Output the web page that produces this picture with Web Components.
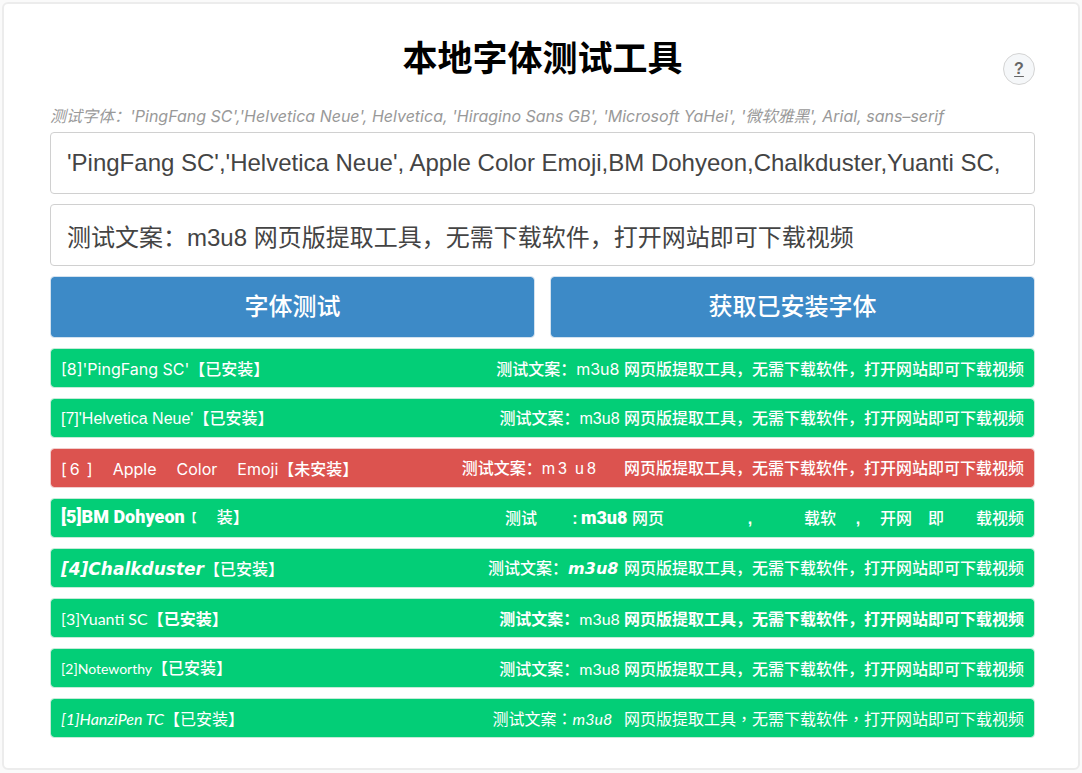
<!DOCTYPE html>
<html lang="zh-CN">
<head>
<meta charset="utf-8">
<meta name="viewport" content="width=device-width, initial-scale=1">
<title>本地字体测试工具</title>
<style>
  body {
    margin: 0;
    padding: 2px;
    background: #fafafa;
    font-family: "Liberation Sans", "Noto Sans CJK SC", sans-serif;
    font-size: 16px;
    line-height: 24px;
  }
</style>
</head>
<body>
<font-tester></font-tester>

<script>
class FontField extends HTMLElement {
  connectedCallback() {
    const root = this.attachShadow({ mode: 'open' });
    root.innerHTML = `
      <style>
        :host { display: block; }
        input {
          display: block; box-sizing: border-box; width: 100%; height: 62px;
          padding: 0 16px; border: 1px solid #d0d0d0; border-radius: 4px;
          background: #fff; color: #444; font: inherit; font-size: 24px; outline: none;
        }
      </style>
      <input type="text">`;
    const input = root.querySelector('input');
    input.value = this.getAttribute('value');
    input.setAttribute('aria-label', this.getAttribute('label'));
  }
}
customElements.define('font-field', FontField);

class ActionButton extends HTMLElement {
  connectedCallback() {
    this.attachShadow({ mode: 'open' }).innerHTML = `
      <style>
        :host { display: block; }
        button {
          display: block; box-sizing: border-box; width: 100%; height: 62px; padding: 0;
          border: 1px solid #d3e2ef; border-radius: 4px;
          background: #3d8ac7; background-clip: padding-box; color: #fff;
          font: inherit; font-size: 24px; font-weight: 500; cursor: pointer;
        }
      </style>
      <button type="button"><slot></slot></button>`;
  }
}
customElements.define('action-button', ActionButton);

class HelpLink extends HTMLElement {
  connectedCallback() {
    this.attachShadow({ mode: 'open' }).innerHTML = `
      <style>
        :host { display: block; }
        a {
          display: flex; align-items: center; justify-content: center;
          box-sizing: border-box; width: 32px; height: 32px;
          border: 1px solid #d4d4d4; border-radius: 50%; background: #f5f7f9;
          color: #666; font-size: 16px; font-weight: bold;
          text-decoration: underline; text-decoration-thickness: 1px; text-underline-offset: 2px;
        }
      </style>
      <a href="#help" title="帮助"><slot></slot></a>`;
  }
}
customElements.define('help-link', HelpLink);

class FontResult extends HTMLElement {
  connectedCallback() {
    this.attachShadow({ mode: 'open' }).innerHTML = `
      <style>
        :host {
          display: flex; justify-content: space-between; align-items: center;
          box-sizing: border-box; height: 40px; padding: 2px 10px 0;
          border: 1px solid #c5ead8; border-radius: 4px;
          background: #03ce77; background-clip: padding-box;
          color: #fff; font-weight: 500; white-space: nowrap;
        }
        :host([missing]) { background-color: #dc534f; border-color: #f0cfce; }
      </style>
      <slot name="name"></slot>
      <slot name="sample"></slot>`;
  }
}
customElements.define('font-result', FontResult);

class FontTester extends HTMLElement {
  connectedCallback() {
    const tail = '网页版提取工具，无需下载软件，打开网站即可下载视频';
    const row = (font, n, name, lang = 'zh-CN') => `
      <font-result class="${font}" lang="${lang}">
        <span slot="name"><b>[${n}]${name}</b>【已安装】</span>
        <span slot="sample">测试文案：<b>m3u8 </b>${tail}</span>
      </font-result>`;
    this.attachShadow({ mode: 'open' }).innerHTML = `
      <style>
        :host {
          display: block; box-sizing: border-box; padding: 25px 43px 30px 46px;
          border: 2px solid #ececec; border-radius: 6px; background: #fff;
        }
        header { display: grid; grid-template: 56px / 1fr auto 1fr; }
        h1 { grid-column: 2; margin: 0; font-size: 35px; line-height: 60px; color: #000; }
        help-link { justify-self: end; align-self: end; }
        .hint {
          margin: 0; padding: 19px 0 4px; color: #999; font-style: italic;
          font-family: Inter, "Noto Sans CJK SC", sans-serif;
        }
        .stack { display: grid; gap: 10px; }
        .actions { display: grid; grid-template-columns: 1fr 1fr; gap: 15px; }
        b { font-weight: 400; }
        .pingfang b { font-family: "PingFang SC", Inter, sans-serif; }
        .dohyeon { padding-top: 0; }
        .dohyeon b { font-family: "BM Dohyeon", Roboto, sans-serif; font-size: 18px; font-weight: 900; }
        .chalk b { font-family: Chalkduster, "DejaVu Sans", sans-serif; font-style: italic; font-weight: 700; }
        .chalk [slot="name"] b { font-size: 17px; }
        .yuanti b { font-family: "Yuanti SC", Lato, sans-serif; }
        .yuanti { font-weight: 700; }
        .note b { font-family: Noteworthy, Lato, sans-serif; }
        .note [slot="name"] b { font-size: 14px; }
        .hanzi { font-family: "Liberation Sans", "Noto Sans CJK TC", sans-serif; font-weight: 400; }
        .hanzi b { font-family: "HanziPen TC", Lato, sans-serif; font-style: italic; }
        .hanzi [slot="sample"] b { margin: 0 8px 0 0; }
        .cell { display: inline-block; width: 20px; white-space: pre; }
        .digit { box-sizing: border-box; padding-left: 3px; }
        .gap { display: inline-block; width: calc(var(--n) * 16px); }
        .dot { display: inline-block; width: 12px; text-align: center; font-weight: 700; }
        .bracket { font-size: 12px; margin-right: -12px; }
      </style>
      <header>
        <h1>本地字体测试工具</h1>
        <help-link>?</help-link>
      </header>
      <p class="hint">测试字体：'PingFang SC','Helvetica Neue', Helvetica, 'Hiragino Sans GB', 'Microsoft YaHei', '微软雅黑', Arial, sans–serif</p>
      <div class="stack">
        <font-field label="测试字体" value="'PingFang SC','Helvetica Neue', Apple Color Emoji,BM Dohyeon,Chalkduster,Yuanti SC,"></font-field>
        <font-field label="测试文案" value="测试文案：m3u8 网页版提取工具，无需下载软件，打开网站即可下载视频"></font-field>
        <div class="actions">
          <action-button>字体测试</action-button>
          <action-button>获取已安装字体</action-button>
        </div>
        ${row('pingfang', 8, "'PingFang SC'")}
        ${row('helvetica', 7, "'Helvetica Neue'")}
        <font-result class="pingfang" missing>
          <span slot="name"><b>[<span class="cell digit">6</span>]<span class="cell"> </span>Apple<span class="cell"> </span>Color<span class="cell"> </span>Emoji</b>【未安装】</span>
          <span slot="sample">测试文案：m<span class="cell digit">3</span>u<span class="cell digit">8</span><span class="cell"> </span>${tail}</span>
        </font-result>
        <font-result class="dohyeon">
          <span slot="name"><b>[5]BM Dohyeon</b><span class="bracket">【</span><span class="gap" style="--n:2"></span>装】</span>
          <span slot="sample">测试<span class="gap" style="--n:2"></span><span class="dot">:</span><b>m3u8 </b>网页<span class="gap" style="--n:5"></span><span class="dot">,</span><span class="gap" style="--n:3"></span>载软<span class="gap" style="--n:1"></span><span class="dot">,</span><span class="gap" style="--n:1"></span>开网<span class="gap" style="--n:1"></span>即<span class="gap" style="--n:2"></span>载视频</span>
        </font-result>
        ${row('chalk', 4, 'Chalkduster')}
        ${row('yuanti', 3, 'Yuanti SC')}
        ${row('note', 2, 'Noteworthy')}
        ${row('hanzi', 1, 'HanziPen TC', 'zh-Hant')}
      </div>`;
  }
}
customElements.define('font-tester', FontTester);
</script>
</body>
</html>
